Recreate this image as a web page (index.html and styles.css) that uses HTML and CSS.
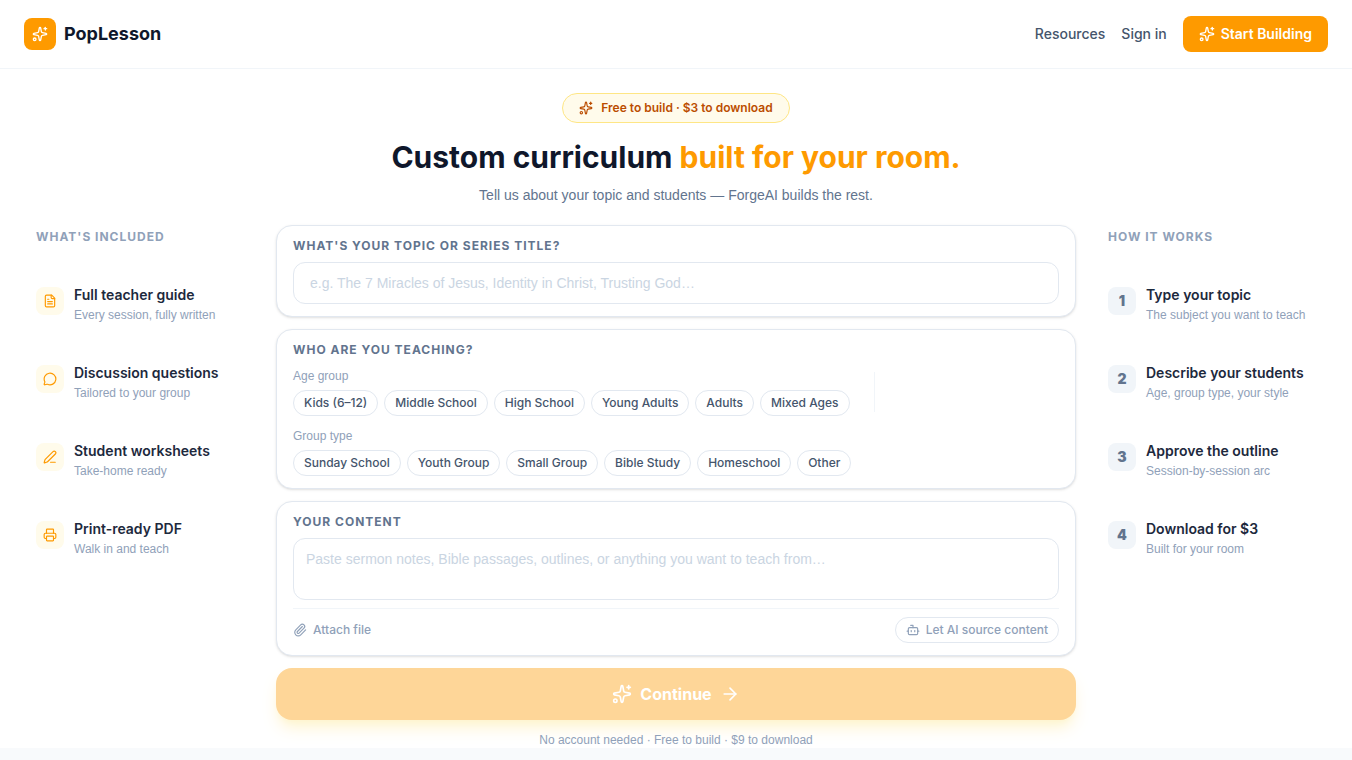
FILE: index.html
```html
<!DOCTYPE html>
<html lang="en">
  <head>
    <meta charset="utf-8">
    <meta name="viewport" content="width=device-width, initial-scale=1">
    <title>PopLesson</title>
    <link rel="stylesheet" href="styles.css">
  </head>
  <body>
    <svg class="defs" aria-hidden="true">
      <symbol id="sparkles" viewBox="0 0 24 24">
        <path d="M11.017 2.814a1 1 0 0 1 1.966 0l1.051 5.558a2 2 0 0 0 1.594 1.594l5.558 1.051a1 1 0 0 1 0 1.966l-5.558 1.051a2 2 0 0 0-1.594 1.594l-1.051 5.558a1 1 0 0 1-1.966 0l-1.051-5.558a2 2 0 0 0-1.594-1.594l-5.558-1.051a1 1 0 0 1 0-1.966l5.558-1.051a2 2 0 0 0 1.594-1.594z"/>
        <path d="M20 2v4"/>
        <path d="M22 4h-4"/>
        <circle cx="4" cy="20" r="2"/>
      </symbol>
    </svg>

    <header class="header">
      <a class="brand" href="#">
        <span class="logo"><svg class="icon"><use href="#sparkles"/></svg></span>
        PopLesson
      </a>
      <nav class="nav">
        <a href="#">Resources</a>
        <a href="#">Sign in</a>
        <a class="start" href="#"><svg class="icon"><use href="#sparkles"/></svg>Start Building</a>
      </nav>
    </header>

    <main class="main">
      <div class="hero">
        <div class="badge"><svg class="icon small"><use href="#sparkles"/></svg>Free to build · $3 to download</div>
        <h1>Custom curriculum <span>built for your room.</span></h1>
        <p>Tell us about your topic and students — ForgeAI builds the rest.</p>
      </div>

      <div class="columns">
        <aside class="side">
          <h2>What's included</h2>
          <div class="item">
            <div class="tile amber">
              <svg class="icon small" viewBox="0 0 24 24"><path d="M15 2H6a2 2 0 0 0-2 2v16a2 2 0 0 0 2 2h12a2 2 0 0 0 2-2V7Z"/><path d="M14 2v4a2 2 0 0 0 2 2h4"/><path d="M10 9H8"/><path d="M16 13H8"/><path d="M16 17H8"/></svg>
            </div>
            <div><h3>Full teacher guide</h3><p>Every session, fully written</p></div>
          </div>
          <div class="item">
            <div class="tile amber">
              <svg class="icon small" viewBox="0 0 24 24"><path d="M2.992 16.342a2 2 0 0 1 .094 1.167l-1.065 3.29a1 1 0 0 0 1.236 1.168l3.413-.998a2 2 0 0 1 1.099.092 10 10 0 1 0-4.777-4.719"/></svg>
            </div>
            <div><h3>Discussion questions</h3><p>Tailored to your group</p></div>
          </div>
          <div class="item">
            <div class="tile amber">
              <svg class="icon small" viewBox="0 0 24 24"><path d="M13 21h8"/><path d="M21.174 6.812a1 1 0 0 0-3.986-3.987L3.842 16.174a2 2 0 0 0-.5.83l-1.321 4.352a.5.5 0 0 0 .623.622l4.353-1.32a2 2 0 0 0 .83-.497z"/></svg>
            </div>
            <div><h3>Student worksheets</h3><p>Take-home ready</p></div>
          </div>
          <div class="item">
            <div class="tile amber">
              <svg class="icon small" viewBox="0 0 24 24"><path d="M6 18H4a2 2 0 0 1-2-2v-5a2 2 0 0 1 2-2h16a2 2 0 0 1 2 2v5a2 2 0 0 1-2 2h-2"/><path d="M6 9V3a1 1 0 0 1 1-1h10a1 1 0 0 1 1 1v6"/><rect x="6" y="14" width="12" height="8" rx="1"/></svg>
            </div>
            <div><h3>Print-ready PDF</h3><p>Walk in and teach</p></div>
          </div>
        </aside>

        <form class="builder">
          <section class="card">
            <label class="card-title" for="topic">What's your topic or series title?</label>
            <input class="topic" type="text" id="topic" placeholder="e.g. The 7 Miracles of Jesus, Identity in Christ, Trusting God…">
          </section>

          <section class="card">
            <h2 class="card-title">Who are you teaching?</h2>
            <div class="groups">
              <div>
                <div class="label">Age group</div>
                <div class="chips">
                  <button type="button">Kids (6–12)</button>
                  <button type="button">Middle School</button>
                  <button type="button">High School</button>
                  <button type="button">Young Adults</button>
                  <button type="button">Adults</button>
                  <button type="button">Mixed Ages</button>
                </div>
              </div>
              <div class="divider"></div>
              <div>
                <div class="label">Group type</div>
                <div class="chips">
                  <button type="button">Sunday School</button>
                  <button type="button">Youth Group</button>
                  <button type="button">Small Group</button>
                  <button type="button">Bible Study</button>
                  <button type="button">Homeschool</button>
                  <button type="button">Other</button>
                </div>
              </div>
            </div>
          </section>

          <section class="card">
            <label class="card-title" for="content">Your content</label>
            <textarea class="content" id="content" rows="2" placeholder="Paste sermon notes, Bible passages, outlines, or anything you want to teach from…"></textarea>
            <div class="tools">
              <button class="attach" type="button">
                <svg class="icon small" viewBox="0 0 24 24"><path d="m16 6-8.414 8.586a2 2 0 0 0 2.829 2.829l8.414-8.586a4 4 0 1 0-5.657-5.657l-8.379 8.551a6 6 0 1 0 8.485 8.485l8.379-8.551"/></svg>
                Attach file
              </button>
              <button class="source" type="button">
                <svg class="icon small" viewBox="0 0 24 24"><path d="M12 8V4H8"/><rect x="4" y="8" width="16" height="12" rx="2"/><path d="M2 14h2"/><path d="M20 14h2"/><path d="M15 13v2"/><path d="M9 13v2"/></svg>
                Let AI source content
              </button>
            </div>
          </section>

          <button class="continue" type="submit" disabled>
            <svg class="icon large"><use href="#sparkles"/></svg>
            Continue
            <svg class="icon large" viewBox="0 0 24 24"><path d="M5 12h14"/><path d="m12 5 7 7-7 7"/></svg>
          </button>
          <p class="note">No account needed · Free to build · $9 to download</p>
        </form>

        <aside class="side">
          <h2>How it works</h2>
          <div class="item">
            <div class="tile">1</div>
            <div><h3>Type your topic</h3><p>The subject you want to teach</p></div>
          </div>
          <div class="item">
            <div class="tile">2</div>
            <div><h3>Describe your students</h3><p>Age, group type, your style</p></div>
          </div>
          <div class="item">
            <div class="tile">3</div>
            <div><h3>Approve the outline</h3><p>Session-by-session arc</p></div>
          </div>
          <div class="item">
            <div class="tile">4</div>
            <div><h3>Download for $3</h3><p>Built for your room</p></div>
          </div>
        </aside>
      </div>
    </main>
  </body>
</html>
```

FILE: styles.css
```css
* {
  box-sizing: border-box;
  margin: 0;
}
body {
  background-color: #f8fafc;
  color: #0f172b;
  font-family: Inter, "Liberation Sans", sans-serif;
  font-size: 14px;
  line-height: 20px;
}
a {
  color: inherit;
  text-decoration: none;
}
button, input, textarea {
  font: inherit;
}
p, input, textarea, .label {
  font-family: "Liberation Sans", Arial, sans-serif;
}
button {
  background: none;
  border: none;
  cursor: pointer;
}
.defs {
  display: none;
}
.icon {
  width: 16px;
  height: 16px;
  flex-shrink: 0;
  fill: none;
  stroke: currentColor;
  stroke-width: 2;
  stroke-linecap: round;
  stroke-linejoin: round;
}
.icon.small {
  width: 14px;
  height: 14px;
}
.icon.large {
  width: 20px;
  height: 20px;
}

/* header */
.header {
  display: flex;
  align-items: center;
  justify-content: space-between;
  padding: 16px 24px;
  background-color: #fff;
  border-bottom: 1px solid #f1f5f9;
}
.brand {
  display: flex;
  align-items: center;
  gap: 8px;
  font-size: 18px;
  font-weight: 700;
}
.logo {
  display: flex;
  align-items: center;
  justify-content: center;
  width: 32px;
  height: 32px;
  border-radius: 8px;
  background-color: #fe9a00;
  color: #fff;
}
.nav {
  display: flex;
  align-items: center;
  gap: 16px;
  color: #45556c;
  font-weight: 500;
}
.start {
  display: flex;
  align-items: center;
  gap: 6px;
  padding: 8px 16px;
  border-radius: 8px;
  background-color: #fe9a00;
  color: #fff;
  font-weight: 600;
}

/* hero */
.main {
  padding-top: 24px;
  background-color: #fff;
}
.hero {
  padding-bottom: 20px;
  text-align: center;
}
.badge {
  display: inline-flex;
  align-items: center;
  gap: 8px;
  padding: 6px 16px;
  border: 1px solid #fee685;
  border-radius: 999px;
  background-color: #fffbeb;
  color: #bb4d00;
  font-size: 12px;
  font-weight: 600;
  line-height: 16px;
}
.hero h1 {
  margin: 16px 0 10px;
  font-size: 30px;
  font-weight: 700;
  line-height: 36px;
}
.hero h1 span {
  color: #fe9a00;
}
.hero p {
  color: #62748e;
}

/* three columns */
.columns {
  display: grid;
  grid-template-columns: 208px 1fr 208px;
  gap: 32px;
  max-width: 1280px;
  margin: 0 auto;
}
.side {
  display: flex;
  flex-direction: column;
  gap: 40px;
  padding-top: 4px;
}
.side h2 {
  color: #90a1b9;
  font-size: 12px;
  font-weight: 700;
  line-height: 16px;
  letter-spacing: 1px;
  text-transform: uppercase;
}
.item {
  display: flex;
  gap: 10px;
}
.item h3 {
  color: #1d293d;
  font-size: 14px;
  font-weight: 600;
}
.item p {
  margin-top: 2px;
  color: #90a1b9;
  font-size: 12px;
  line-height: 16px;
}
.tile {
  display: flex;
  align-items: center;
  justify-content: center;
  flex-shrink: 0;
  width: 28px;
  height: 28px;
  margin-top: 2px;
  border-radius: 8px;
  background-color: #f1f5f9;
  color: #62748e;
  font-weight: 900;
}
.tile.amber {
  background-color: #fffbeb;
  color: #fe9a00;
}

/* builder */
.builder {
  display: flex;
  flex-direction: column;
  gap: 12px;
  min-width: 0;
}
.card {
  padding: 12px 16px;
  border: 1px solid #e2e8f0;
  border-radius: 16px;
  background-color: #fff;
  box-shadow: 0 1px 3px rgba(0, 0, 0, 0.1), 0 1px 2px -1px rgba(0, 0, 0, 0.1);
}
.card-title {
  display: block;
  color: #62748e;
  font-size: 12px;
  font-weight: 700;
  line-height: 16px;
  letter-spacing: 1px;
  text-transform: uppercase;
}
.topic, .content {
  display: block;
  width: 100%;
  margin-top: 8px;
  border: 1px solid #e2e8f0;
  border-radius: 12px;
  background-color: #fff;
  color: #1d293d;
}
.topic {
  padding: 10px 16px;
}
.content {
  padding: 10px 12px;
  resize: none;
}
.topic::placeholder, .content::placeholder {
  color: #cad5e2;
}
.groups {
  display: flex;
  flex-wrap: wrap;
  align-items: center;
  gap: 12px 24px;
  margin-top: 10px;
}
.label {
  margin-bottom: 6px;
  color: #90a1b9;
  font-size: 12px;
  line-height: 16px;
}
.chips {
  display: flex;
  flex-wrap: wrap;
  gap: 6px;
}
.chips button, .source {
  padding: 4px 10px;
  border: 1px solid #e2e8f0;
  border-radius: 999px;
  background-color: #fff;
  color: #45556c;
  font-size: 12px;
  font-weight: 500;
  line-height: 16px;
}
.divider {
  width: 1px;
  height: 40px;
  background-color: #f1f5f9;
}
.tools {
  display: flex;
  align-items: center;
  justify-content: space-between;
  margin-top: 8px;
  padding-top: 8px;
  border-top: 1px solid #f1f5f9;
}
.attach, .source {
  display: flex;
  align-items: center;
  gap: 6px;
  color: #90a1b9;
  font-size: 12px;
  font-weight: 500;
  line-height: 16px;
}
.attach {
  padding: 0;
}
.continue {
  display: flex;
  align-items: center;
  justify-content: center;
  gap: 8px;
  padding: 14px;
  border-radius: 16px;
  background-color: #fe9a00;
  box-shadow: 0 10px 15px -3px #fee685, 0 4px 6px -4px #fee685;
  color: #fff;
  font-size: 16px;
  font-weight: 700;
  line-height: 24px;
  opacity: 0.4;
}
.note {
  position: relative;
  color: #90a1b9;
  font-size: 12px;
  line-height: 16px;
  text-align: center;
}
```
